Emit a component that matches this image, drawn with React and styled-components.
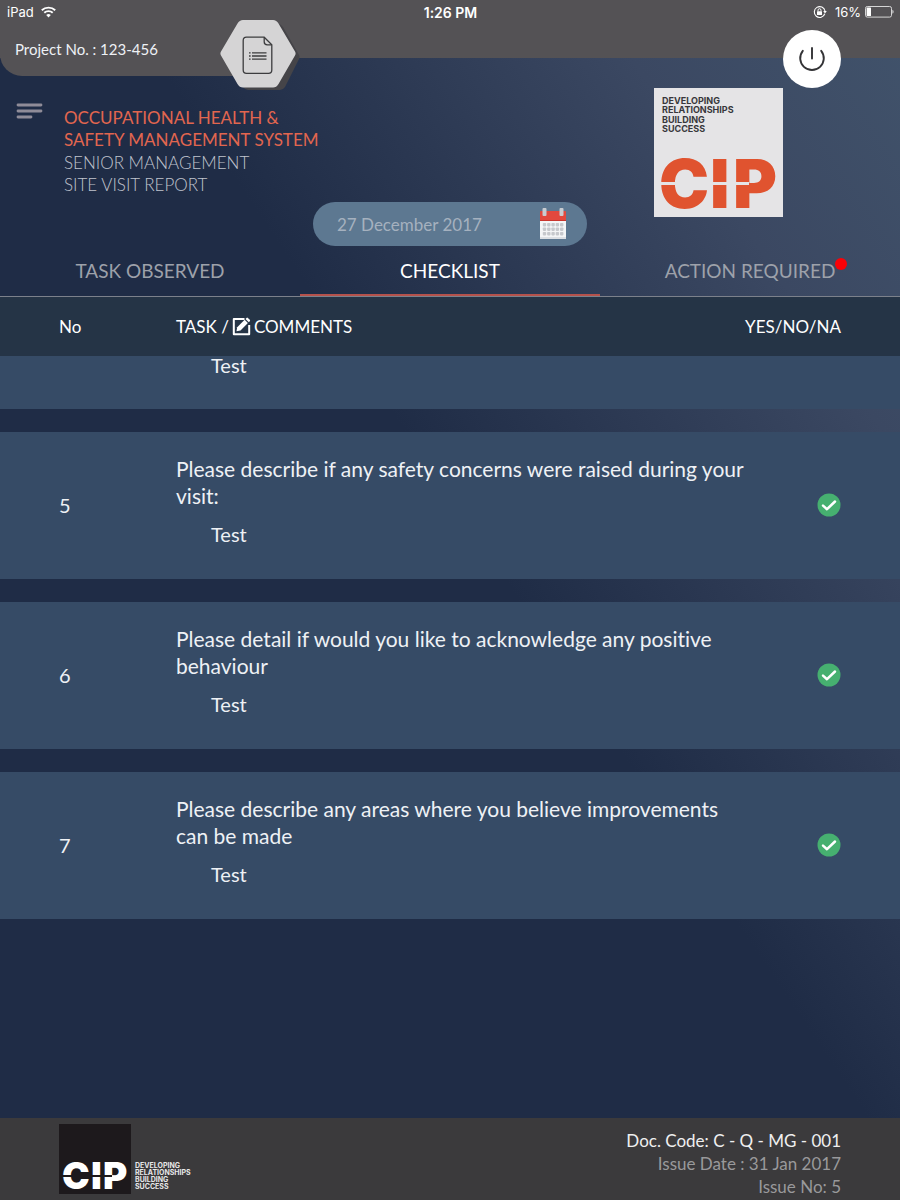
import React from "react";
import styled, { createGlobalStyle, css } from "styled-components";

const GlobalStyle = createGlobalStyle`
  *, *::before, *::after { box-sizing: border-box; }
  body { margin: 0; }
  button, input { font: inherit; color: inherit; border: 0; background: none; padding: 0; margin: 0; }
  button { cursor: pointer; }
  svg { display: block; }
`;

const Page = styled.div`
  display: flex;
  flex-direction: column;
  min-height: 100vh;
  font-family: Lato, "Liberation Sans", sans-serif;
  font-weight: 400;
  font-variant-ligatures: none;
  color: #eef1f5;
  background: linear-gradient(56deg, #1f2c46 54%, #3b4862 82%, #41536b 100%);
`;

const TopBar = styled.div`
  position: relative;
  height: 58px;
  background: #545255;
`;

const StatusBar = styled.div`
  display: grid;
  grid-template-columns: 1fr auto 1fr;
  align-items: center;
  height: 24px;
  padding: 0 6px 0 7px;
  font-family: Inter, "Liberation Sans", sans-serif;
  font-size: 13px;
  color: #ffffff;
`;

const StatusGroup = styled.div`
  display: flex;
  align-items: center;
  gap: ${(p) => p.$gap}px;
  justify-content: ${(p) => (p.$end ? "flex-end" : "flex-start")};
`;

const Clock = styled.span`
  font-size: 14px;
  font-weight: 600;
`;

const ProjectTag = styled.div`
  width: 260px;
  height: 52px;
  padding: 14px 0 0 15px;
  font-size: 15px;
  line-height: 22px;
  background: #545255;
  border-bottom-left-radius: 22px;
`;

const HexButton = styled.button`
  position: absolute;
  top: 19px;
  left: 219px;
`;

const PowerButton = styled.button`
  position: absolute;
  top: 30px;
  right: 59px;
  display: grid;
  place-items: center;
  width: 58px;
  height: 58px;
  border-radius: 50%;
  background: #ffffff;
`;

const Header = styled.header`
  display: grid;
  grid-template-columns: auto 1fr auto;
  grid-template-rows: 114px 44px;
  padding: 30px 117px 0 16px;
`;

const MenuButton = styled.button`
  align-self: start;
  margin: 15px 21px 0 0;
`;

const Titles = styled.div`
  padding-top: 19px;
  font-size: 17px;
  line-height: 22px;
`;

const SystemTitle = styled.h1`
  margin: 0 0 1px;
  font-size: inherit;
  font-weight: 400;
  color: #e2664f;
`;

const ReportTitle = styled.p`
  margin: 0;
  font-weight: 300;
  color: #c0c4ce;
`;

const BrandCell = styled.div`
  grid-column: 3;
  grid-row: 1 / 3;
`;

const DateRow = styled.div`
  display: flex;
  justify-content: center;
  margin-top: -44px;
`;

const DateField = styled.label`
  display: flex;
  align-items: center;
  justify-content: space-between;
  width: 274px;
  height: 44px;
  padding: 0 20px 0 24px;
  border-radius: 22px;
  background: #5d7891;
  color: #a5b1bf;
  font-size: 17px;

  input { width: 170px; outline: 0; }
`;

const Tabs = styled.nav`
  display: grid;
  grid-template-columns: repeat(3, 1fr);
  height: 51px;
  border-bottom: 1px solid #7c818b;
`;

const Tab = styled.button`
  font-size: 19px;
  color: #9da1aa;
  border-bottom: 2px solid transparent;
  ${(p) =>
    p.$active &&
    css`
      color: #ffffff;
      border-bottom-color: #b5524c;
    `}
`;

const TabLabel = styled.span`
  position: relative;
`;

const Dot = styled.span`
  position: absolute;
  top: -1px;
  right: -12px;
  width: 12px;
  height: 12px;
  border-radius: 50%;
  background: #fb0207;
`;

const Main = styled.main`
  flex: 1;
`;

const Table = styled.table`
  width: 100%;
  border-collapse: separate;
  border-spacing: 0;
  table-layout: fixed;
  text-align: left;
`;

const HeadCell = styled.th`
  width: ${(p) => p.$width || "auto"};
  height: 59px;
  padding: ${(p) => p.$pad};
  background: #253446;
  font-size: 17px;
  font-weight: 400;
  color: #ffffff;
  text-align: ${(p) => p.$align || "left"};
`;

const HeadLabel = styled.span`
  display: flex;
  align-items: center;
  gap: 3px;
`;

const Cell = styled.td`
  padding: ${(p) => p.$pad};
  border-bottom: 23px solid transparent;
  background: #364b66;
  background-clip: padding-box;
  vertical-align: middle;
  font-size: 20px;
`;

const Question = styled.p`
  margin: 0 0 16px;
  font-size: 21px;
  line-height: 27px;
`;

const Comment = styled.p`
  margin: 0;
  padding-left: 35px;
  line-height: 18px;
`;

const Answer = styled.div`
  display: flex;
  justify-content: flex-end;
`;

const Footer = styled.footer`
  display: flex;
  justify-content: space-between;
  align-items: flex-start;
  height: 82px;
  padding: 6px 59px 0;
  background: #3b3a3c;
`;

const DocInfo = styled.div`
  padding-top: 5px;
  font-size: 17px;
  line-height: 23px;
  text-align: right;
  color: #99999b;
`;

const DocCode = styled.div`
  color: #efeff0;
`;

const WifiIcon = () => (
  <svg width="15" height="12" viewBox="0 0 15 12" fill="none" stroke="#fff" strokeWidth="1.9">
    <path d="M.8 4.3a9.6 9.6 0 0 1 13.4 0" />
    <path d="M3.3 6.8a6 6 0 0 1 8.4 0" />
    <path d="M7.5 11.4 5.2 9a3.3 3.3 0 0 1 4.6 0z" fill="#fff" stroke="none" />
  </svg>
);

const RotationLockIcon = () => (
  <svg width="14" height="14" viewBox="0 0 14 14" fill="none" stroke="#fff">
    <path d="M11.8 8.8A5.4 5.4 0 1 1 12 6" strokeWidth="1.1" />
    <path d="M10.2 6h3.6L12 8.4z" fill="#fff" stroke="none" />
    <rect x="4" y="6.2" width="5" height="3.9" rx=".5" fill="#fff" stroke="none" />
    <path d="M5 6.4V5.2a1.5 1.5 0 0 1 3 0v1.2" strokeWidth="1" />
  </svg>
);

const BatteryIcon = () => (
  <svg width="29" height="12" viewBox="0 0 29 12">
    <rect x=".5" y=".5" width="26" height="10.6" rx="1.8" fill="none" stroke="#d5d5d6" />
    <rect x="1.6" y="1.6" width="4.4" height="8.4" rx=".6" fill="#fff" />
    <path d="M27.4 3.8c1.6.6 1.6 3.4 0 4z" fill="#d5d5d6" />
  </svg>
);

const HexIcon = () => (
  <svg width="82" height="72" viewBox="0 0 82 72">
    <path
      d="M27 5h32q3 0 5 3l16 28q1 2 0 4L66 68q-2 3-5 3H29q-3 0-5-3z"
      fill="#454448"
    />
    <path
      d="M24 1h30q3.500 0 5.500 3.500l16.500 28q1.200 2 0 4L59.500 65q-2 3.500-5.500 3.500H24q-3.500 0-5.500-3.500L2 36.500q-1.200-2 0-4l16.500-28Q20.500 1 24 1z"
      fill="#d5d4d5"
    />
    <g fill="none" stroke="#3c3c3e" strokeWidth="1.300">
      <path d="M27.500 18.200h17.700l7.600 7.600V51q0 3.300-3.300 3.300h-22q-3.300 0-3.300-3.300V21.500q0-3.300 3.300-3.300z" />
      <path d="M45.200 18.200v4.500q0 3.100 3.100 3.100h4.500" />
      <path d="M33 33.800h14.500M33 37h14.500M33 40.200h14.500" />
      <path d="M30 33.800h1.600M30 37h1.600M30 40.200h1.600" />
    </g>
  </svg>
);

const PowerIcon = () => (
  <svg width="28" height="28" viewBox="0 0 28 28" fill="none" stroke="#333336" strokeWidth="1.900" strokeLinecap="round">
    <path d="M14 3v10.500" />
    <path d="M4.800 5.800a11.800 11.800 0 1 0 18.400 0" />
  </svg>
);

const MenuIcon = () => (
  <svg width="27" height="16" viewBox="0 0 27 16" stroke="#8f8c98" strokeWidth="2.800" strokeLinecap="round">
    <path d="M2 2h23M2 8h23M2 14h13" />
  </svg>
);

const CalendarIcon = () => (
  <svg width="28" height="32" viewBox="0 0 28 32">
    <path d="M1 12h26v19H1z" fill="#f4f5f6" />
    <path d="M1 29h26v2H1z" fill="#dcdfe3" />
    <path d="M1 4q0-1 1-1h24q1 0 1 1v9H1z" fill="#e2483d" />
    <path d="M1 12h26v1H1z" fill="#c9352d" />
    <rect x="3.500" y="0" width="4" height="8" rx="1" fill="#c9ccd1" />
    <rect x="20.500" y="0" width="4" height="8" rx="1" fill="#c9ccd1" />
    <g fill="#c6c8cc">
      {[15, 19.500, 24].map((y) =>
        [3.800, 8.100, 12.400, 16.700, 21].map((x) => (
          <rect key={`${x}-${y}`} x={x} y={y} width="3.400" height="3.400" rx=".8" />
        ))
      )}
    </g>
  </svg>
);

const EditIcon = () => (
  <svg width="19" height="19" viewBox="0 0 19 19">
    <path d="M12.500 2H1.800v15.200h15.400V8" fill="none" stroke="#fff" strokeWidth="2" strokeLinejoin="round" />
    <path d="M5.200 10.200 12.600 2.800l3.300 3.300-7.400 7.400-4 .8z" fill="#fff" />
    <path d="m13.500 1.900 1-1q.7-.7 1.400 0l1.900 1.900q.7.7 0 1.400l-1 1z" fill="#fff" />
  </svg>
);

const CheckIcon = () => (
  <svg width="24" height="24" viewBox="0 0 24 24" role="img" aria-label="Yes">
    <circle cx="12" cy="12" r="11.500" fill="#46b070" />
    <path d="m6 12.600 4 3.600 8-7.700" fill="none" stroke="#fff" strokeWidth="2.500" strokeLinecap="round" strokeLinejoin="round" />
  </svg>
);

const LogoText = styled.text`
  font-family: Inter, "Liberation Sans", sans-serif;
  font-weight: ${(p) => p.$weight};
  font-size: ${(p) => p.$size}px;
`;

const Tagline = ({ x, ys, size, fill }) => (
  <g fill={fill}>
    {["DEVELOPING", "RELATIONSHIPS", "BUILDING", "SUCCESS"].map((word, i) => (
      <LogoText key={word} $weight={700} $size={size} x={x} y={ys[i]}>
        {word}
      </LogoText>
    ))}
  </g>
);

const BrandLogo = () => (
  <svg width="129" height="129" viewBox="0 0 129 129">
    <rect width="129" height="129" fill="#e5e4e6" />
    <Tagline x={8} ys={[16, 25, 35, 44]} size={9} fill="#38373b" />
    <LogoText $weight={900} $size={67} fill="#e0532f" x="5 56 79" y="120">
      CIP
    </LogoText>
    <path d="M5 94h18v3H5zM57 94h19v3H57zM80 94h15v3H80z" fill="#e5e4e6" />
  </svg>
);

const FooterLogo = () => (
  <svg width="138" height="70" viewBox="0 0 138 70">
    <rect width="72" height="70" fill="#1d191c" />
    <LogoText $weight={900} $size={37} fill="#ffffff" x="3 32 44" y="65">
      CIP
    </LogoText>
    <path d="M2 51h11v2H2zM32 51h12v2H32zM45 51h8v2H45z" fill="#1d191c" />
    <Tagline x={76} ys={[44, 51, 58, 65]} size={7} fill="#e8e8e8" />
  </svg>
);

const ROWS = [
  { no: "5", question: "Please describe if any safety concerns were raised during your visit:", comment: "Test" },
  { no: "6", question: "Please detail if would you like to acknowledge any positive behaviour", comment: "Test" },
  { no: "7", question: "Please describe any areas where you believe improvements can be made", comment: "Test" },
];

export default function App() {
  return (
    <Page>
      <GlobalStyle />
      <TopBar>
        <StatusBar>
          <StatusGroup $gap={7}>
            <span>iPad</span>
            <WifiIcon />
          </StatusGroup>
          <Clock>1:26 PM</Clock>
          <StatusGroup $gap={8} $end>
            <RotationLockIcon />
            <StatusGroup $gap={4}>
              <span>16%</span>
              <BatteryIcon />
            </StatusGroup>
          </StatusGroup>
        </StatusBar>
        <ProjectTag>Project No. : 123-456</ProjectTag>
        <HexButton aria-label="Project document">
          <HexIcon />
        </HexButton>
        <PowerButton aria-label="Log out">
          <PowerIcon />
        </PowerButton>
      </TopBar>

      <Header>
        <MenuButton aria-label="Menu">
          <MenuIcon />
        </MenuButton>
        <Titles>
          <SystemTitle>
            OCCUPATIONAL HEALTH &amp;
            <br />
            SAFETY MANAGEMENT SYSTEM
          </SystemTitle>
          <ReportTitle>
            SENIOR MANAGEMENT
            <br />
            SITE VISIT REPORT
          </ReportTitle>
        </Titles>
        <BrandCell>
          <BrandLogo />
        </BrandCell>
      </Header>
      <DateRow>
        <DateField>
          <input type="text" defaultValue="27 December 2017" aria-label="Visit date" />
          <CalendarIcon />
        </DateField>
      </DateRow>

      <Tabs>
        <Tab>TASK OBSERVED</Tab>
        <Tab $active aria-current="page">
          CHECKLIST
        </Tab>
        <Tab>
          <TabLabel>
            ACTION REQUIRED
            <Dot />
          </TabLabel>
        </Tab>
      </Tabs>

      <Main>
        <Table>
          <thead>
            <tr>
              <HeadCell $width="176px" $pad="0 0 0 59px">No</HeadCell>
              <HeadCell $pad="0">
                <HeadLabel>
                  TASK / <EditIcon /> COMMENTS
                </HeadLabel>
              </HeadCell>
              <HeadCell $width="155px" $pad="0 59px 0 0" $align="right">
                YES/NO/NA
              </HeadCell>
            </tr>
          </thead>
          <tbody>
            <tr>
              <Cell $pad="0" />
              <Cell $pad="0 0 35px">
                <Comment>Test</Comment>
              </Cell>
              <Cell $pad="0" />
            </tr>
            {ROWS.map((row) => (
              <tr key={row.no}>
                <Cell $pad="0 0 2px 59px">{row.no}</Cell>
                <Cell $pad="23px 0 36px">
                  <Question>{row.question}</Question>
                  <Comment>{row.comment}</Comment>
                </Cell>
                <Cell $pad="0 59px 2px 0">
                  <Answer>
                    <CheckIcon />
                  </Answer>
                </Cell>
              </tr>
            ))}
          </tbody>
        </Table>
      </Main>

      <Footer>
        <FooterLogo />
        <DocInfo>
          <DocCode>Doc. Code: C - Q - MG - 001</DocCode>
          <div>Issue Date : 31 Jan 2017</div>
          <div>Issue No: 5</div>
        </DocInfo>
      </Footer>
    </Page>
  );
}
